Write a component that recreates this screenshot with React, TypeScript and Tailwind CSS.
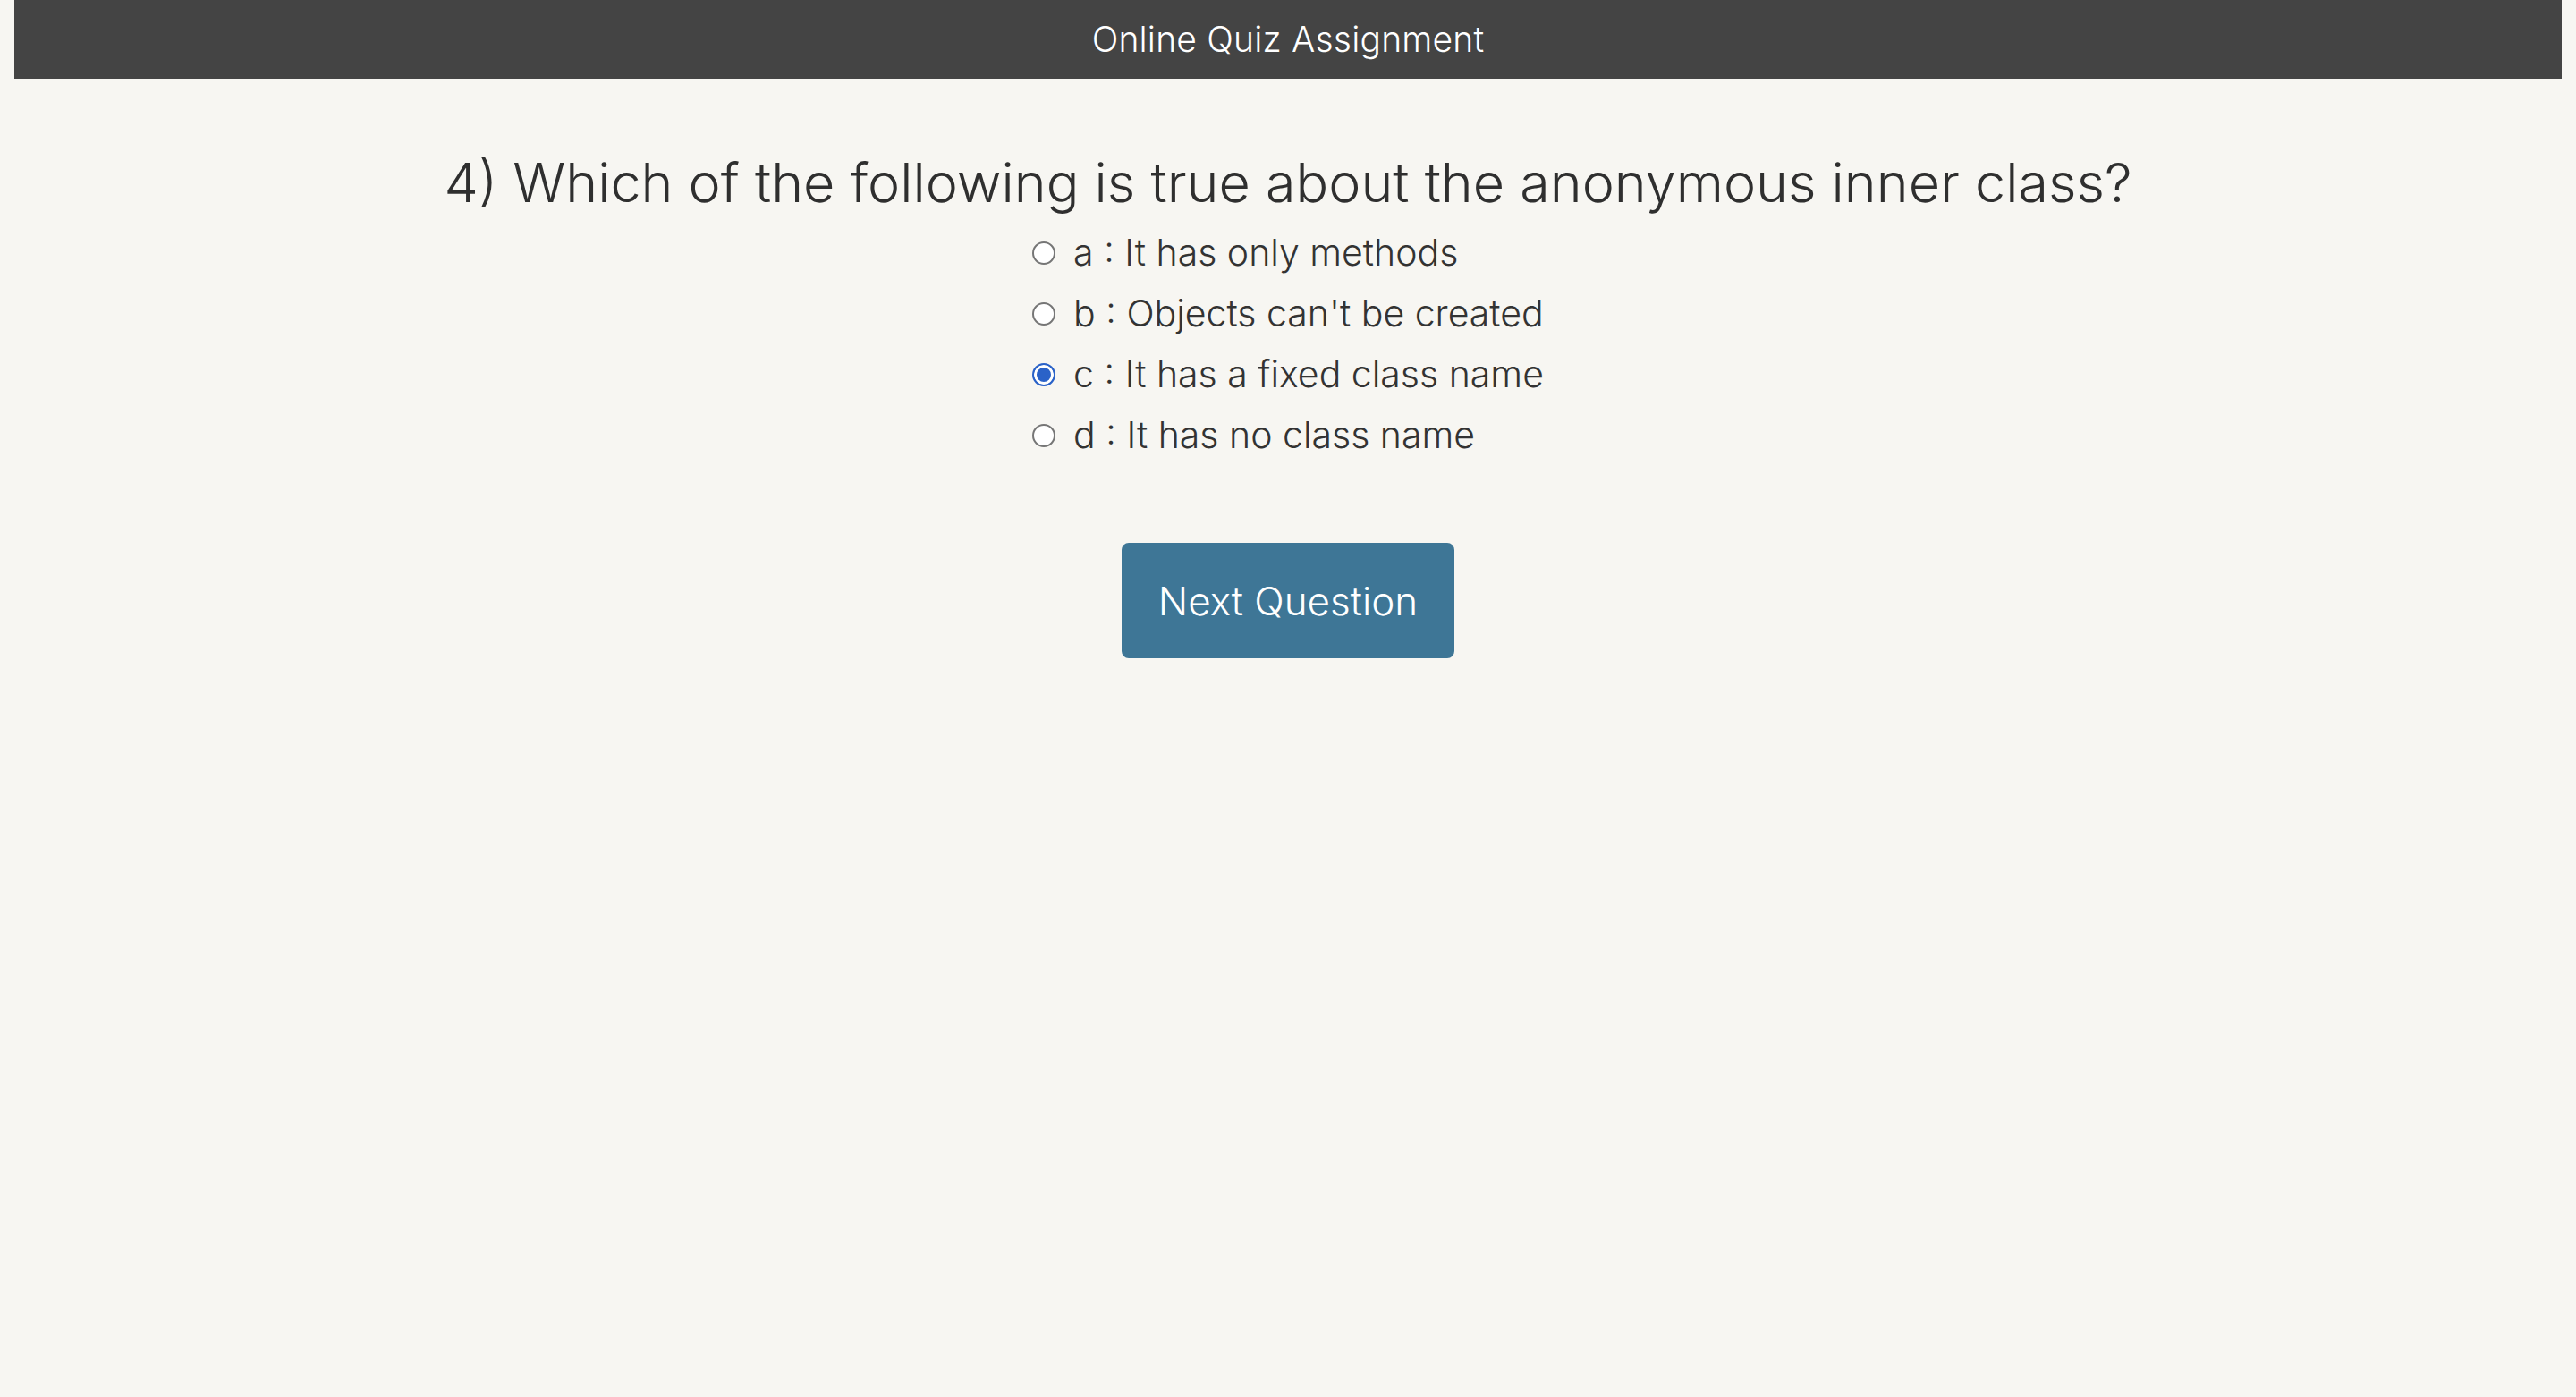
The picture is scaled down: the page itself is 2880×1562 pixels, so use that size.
import { useState } from "react"

const options = [
  { key: "a", text: "It has only methods" },
  { key: "b", text: "Objects can't be created" },
  { key: "c", text: "It has a fixed class name" },
  { key: "d", text: "It has no class name" },
]

const App = () => {
  const [picked, setPicked] = useState("c")

  return (
    <div className="min-h-screen bg-[#f7f6f2] text-[#333333] font-['Inter',_sans-serif]">
      <header className="mx-[16px] h-[88px] bg-[#444444] flex items-center justify-center">
        <h1 className="text-[39px] font-light text-white tracking-[0.2px]">Online Quiz Assignment</h1>
      </header>

      <main className="flex flex-col items-center">
        <h2 className="mt-[86px] text-[61px] leading-none font-light text-[#2f2f2f]">
          4) Which of the following is true about the anonymous inner class?
        </h2>

        <div className="mt-[14px] flex flex-col">
          {options.map((o) => (
            <label key={o.key} className="h-[68px] flex items-center gap-[20px] cursor-pointer">
              <input
                type="radio"
                name="answer"
                checked={picked === o.key}
                onChange={() => setPicked(o.key)}
                className="appearance-none w-[26px] h-[26px] rounded-full border-[2.5px] border-[#767676] bg-white checked:border-[#2a62c8] checked:bg-[#2a62c8] checked:shadow-[inset_0_0_0_3px_white] cursor-pointer"
              />
              <span className="text-[41px] font-light text-[#333333]">
                {o.key} : {o.text}
              </span>
            </label>
          ))}
        </div>

        <button className="mt-[86px] w-[372px] h-[129px] rounded-[8px] bg-[#3e7696] text-white text-[44px] font-light">
          Next Question
        </button>
      </main>
    </div>
  )
}

export default App
